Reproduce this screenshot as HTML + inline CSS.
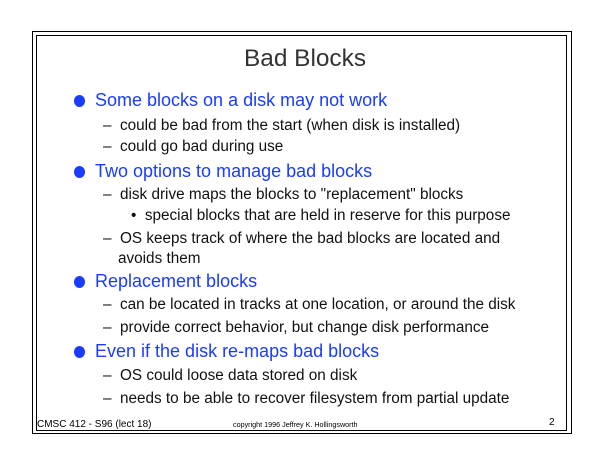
<!DOCTYPE html>
<html><head><style>
body{margin:0;width:605px;height:467px;background:#fff;position:relative;font-family:"Liberation Sans",sans-serif;overflow:hidden}
.o{position:absolute;left:32px;top:31px;width:538px;height:401px;border:1px solid #000}
.i{position:absolute;left:36px;top:35px;width:529px;height:394px;border:1px solid #000}
.t{position:absolute;white-space:nowrap;line-height:1}
.h{left:244px;top:47px;font-size:24.4px;color:#333}
.b{font-size:18px;color:#1a3cff;left:95px}
.d{position:absolute;width:11px;height:12px;border-radius:50%;background:#1a3cff;left:74px}
.s{font-size:15.3px;color:#111;left:103px}
.f{font-size:8px;color:#000}
</style></head><body>
<div class="o"></div><div class="i"></div>
<div class="t h">Bad Blocks</div>
<div class="d" style="top:95px"></div><div class="t b" style="top:91px">Some blocks on a disk may not work</div>
<div class="t s" style="top:118px">–&nbsp;&nbsp;could be bad from the start (when disk is installed)</div>
<div class="t s" style="top:139px">–&nbsp;&nbsp;could go bad during use</div>
<div class="d" style="top:166px"></div><div class="t b" style="top:162px">Two options to manage bad blocks</div>
<div class="t s" style="top:187px">–&nbsp;&nbsp;disk drive maps the blocks to "replacement" blocks</div>
<div class="t s" style="top:208px;left:131px">•&nbsp;&nbsp;special blocks that are held in reserve for this purpose</div>
<div class="t s" style="top:231px">–&nbsp;&nbsp;OS keeps track of where the bad blocks are located and</div>
<div class="t s" style="top:251px;left:118px">avoids them</div>
<div class="d" style="top:276px"></div><div class="t b" style="top:272px">Replacement blocks</div>
<div class="t s" style="top:297px">–&nbsp;&nbsp;can be located in tracks at one location, or around the disk</div>
<div class="t s" style="top:320px">–&nbsp;&nbsp;provide correct behavior, but change disk performance</div>
<div class="d" style="top:346px"></div><div class="t b" style="top:342px">Even if the disk re-maps bad blocks</div>
<div class="t s" style="top:368px">–&nbsp;&nbsp;OS could loose data stored on disk</div>
<div class="t s" style="top:391px">–&nbsp;&nbsp;needs to be able to recover filesystem from partial update</div>
<div class="t f" style="left:37px;top:420px;font-size:10px">CMSC 412 - S96 (lect 18)</div>
<div class="t f" style="left:233px;top:421px;font-size:7.2px">copyright 1996 Jeffrey K. Hollingsworth</div>
<div class="t f" style="left:549px;top:418px;font-size:10px">2</div>
</body></html>
